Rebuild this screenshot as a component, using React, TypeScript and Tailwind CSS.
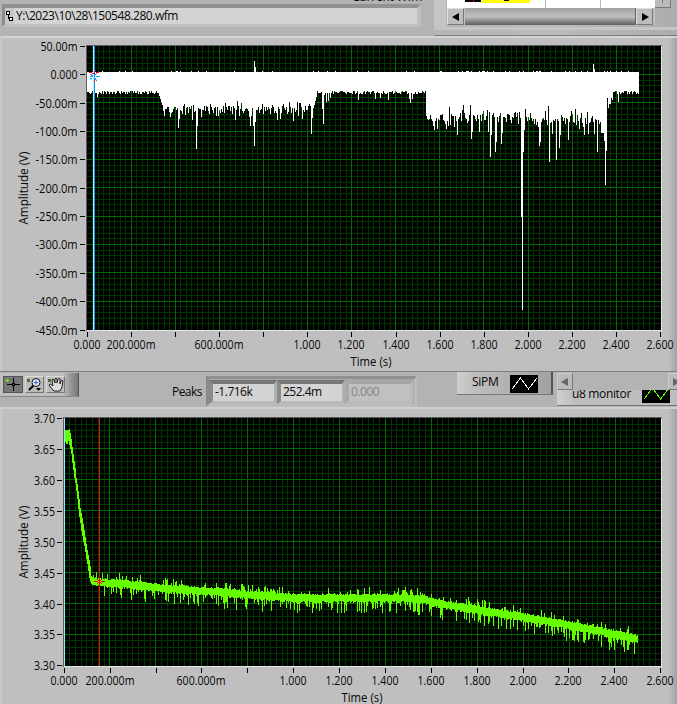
import React from 'react';

const FONT = '"Open Sans", "Noto Sans", sans-serif';

// Repeatable noise, so that the traces look the same on each render.
function noise(seed: number) {
  let s = seed;
  return () => {
    s = (s * 1664525 + 1013904223) % 4294967296;
    return s / 4294967296;
  };
}

function interpolate(points: number[][], x: number) {
  for (let i = 1; i < points.length; i++) {
    if (x <= points[i][0]) {
      const [x0, y0] = points[i - 1];
      const [x1, y1] = points[i];
      return y0 + ((y1 - y0) * (x - x0)) / (x1 - x0);
    }
  }
  return points[points.length - 1][1];
}

const sipmSpikes: Record<number, number> = {
  97: 97, 163: 111, 164: 116, 165: 109, 170: 117, 171: 113, 178: 128, 179: 119, 185: 115, 188: 113, 190: 109, 192: 120, 194: 112,
  196: 149, 197: 126, 201: 117, 216: 116, 218: 116, 235: 120, 249: 117, 250: 126, 251: 116, 253: 126, 254: 146, 255: 122,
  277: 120, 280: 119, 293: 121, 302: 119, 308: 106, 309: 104, 310: 106, 311: 134, 312: 118, 313: 108, 314: 105, 315: 101, 316: 97,
  322: 109, 323: 124, 324: 95, 326: 102, 328: 101, 330: 98, 358: 100, 375: 99, 380: 98, 388: 100, 409: 99, 410: 103, 412: 99,
  426: 116, 428: 120, 434: 130, 435: 121, 437: 129, 446: 129, 449: 107, 454: 127, 457: 135, 463: 105, 470: 105, 471: 139, 472: 132, 479: 132, 487: 110, 488: 132,
  490: 157, 491: 135, 495: 152, 496: 142, 501: 144, 502: 133, 521: 217, 522: 310, 523: 152, 524: 130,
  539: 146, 540: 142, 548: 106, 549: 162, 552: 134, 556: 160, 559: 148, 560: 135, 568: 140, 575: 109, 584: 135, 588: 134, 594: 134, 597: 152,
  601: 133, 602: 133, 603: 133, 604: 141, 605: 185, 606: 151, 607: 98, 608: 108, 609: 104, 610: 104, 611: 98, 612: 100, 618: 102,
};

function sipmPath() {
  const r = noise(71);
  let top = '';
  const lower: string[] = [];
  for (let x = 87; x < 639; x++) {
    let y = 91 + Math.floor(r() * 4);
    if (x > 158 && x < 164) y = 93 + (x - 158) * 3;
    else if (x >= 164 && x < 310) y = 101 + Math.floor(r() * 7 + r() * 9);
    else if (x >= 426 && x < 605) y = 108 + Math.floor(r() * 9 + r() * 10 + r() * 3);
    if (sipmSpikes[x]) y = sipmSpikes[x];
    let t = 72;
    if (r() < (x > 430 ? 0.13 : 0.06)) t = 71;
    if (x === 254) t = 61;
    if (x === 255) t = 67;
    if (x === 593) t = 64;
    if (x === 594) t = 69;
    top += `${x === 87 ? 'M' : 'L'}${x} ${t}H${x + 1}`;
    lower.unshift(`L${x + 1} ${y}H${x}`);
  }
  return top + lower.join('') + 'Z';
}

const monitorMean = [
  [65, 436], [69, 437], [71, 446], [80, 515], [91, 580], [92, 581], [100, 582], [125, 584], [150, 587], [200, 591], [220, 592],
  [250, 595], [293, 598], [400, 598], [420, 599], [440, 604], [478, 610], [523, 617], [568, 625], [614, 634], [638, 639],
];

function monitorPath() {
  const r = noise(314);
  let upper = '';
  const lower: string[] = [];
  for (let x = 65; x < 638; x++) {
    const m = interpolate(monitorMean, x);
    let a: number;
    let b: number;
    if (x < 69) {
      a = 430;
      b = 440 + Math.floor(r() * 6);
    } else if (x < 91) {
      a = m - 6 - r() * 3;
      b = m + 6 + r() * 4;
    } else {
      a = m - 3 - r() * 1.6;
      b = m + 3 + r() * 2;
      if (r() < 0.28) a -= r() * 7;
      if (r() < 0.42) b += r() * (x > 600 ? 13 : 12);
      if (x < 95 || (x > 99 && x < 104)) b = m + 4;
    }
    upper += `${x === 65 ? 'M' : 'L'}${x} ${Math.round(a)}H${x + 1}`;
    lower.unshift(`L${x + 1} ${Math.round(b)}H${x}`);
  }
  return upper + lower.join('') + 'Z';
}

const SIPM = sipmPath();
const MONITOR = monitorPath();

interface GridProps {
  x0: number;
  y0: number;
  stepX: number;
  stepY: number;
  rows: number;
}

function Grid({ x0, y0, stepX, stepY, rows }: GridProps) {
  const w = 661 - x0;
  const h = Math.round(stepY * rows);
  let minor = '';
  let major = '';
  for (let i = 1; i < 13 * 8; i++) {
    const d = `M${Math.floor(x0 + (i * stepX) / 8) + 0.5} ${y0}v${h}`;
    if (i % 8 === 0) major += d;
    else minor += d;
  }
  for (let i = 1; i < rows * 5; i++) {
    const d = `M${x0} ${Math.floor(y0 + (i * stepY) / 5) + 0.5}h${w}`;
    if (i % 5 === 0) major += d;
    else minor += d;
  }
  return (
    <g shapeRendering="crispEdges">
      <rect x={x0 - 1} y={y0 - 1} width={w + 2} height={h + 2} fill="#5c5c5c" />
      <rect x={x0} y={y0 + h} width={w + 1} height={1} fill="#e6e6e6" />
      <rect x={661} y={y0} width={1} height={h} fill="#e6e6e6" />
      <rect x={x0} y={y0} width={w} height={h} fill="#000" />
      <path d={minor} stroke="#003600" />
      <path d={major} stroke="#006a00" />
    </g>
  );
}

function Label({ x, y, w, anchor = 'middle', children }: { x: number; y: number; w: number; anchor?: 'middle' | 'end'; children: string }) {
  return (
    <text x={x} y={y} textAnchor={anchor} textLength={w} lengthAdjust="spacingAndGlyphs" fontFamily={FONT} fontSize="12" fill="#080808">
      {children}
    </text>
  );
}

const timeLabels = ['0.000', '200.000m', '', '600.000m', '', '1.000', '1.200', '1.400', '1.600', '1.800', '2.000', '2.200', '2.400', '2.600'];

function TimeAxis({ x0, step, y, titleX }: { x0: number; step: number; y: number; titleX: number }) {
  return (
    <g>
      {timeLabels.map((t, i) => {
        const x = Math.floor(x0 + i * step + 0.3);
        return (
          <g key={i}>
            <rect x={x} y={y} width="1" height="5" fill="#000" />
            {t && <Label x={x} y={y + 17} w={t.length > 5 ? 49 : 27}>{t}</Label>}
          </g>
        );
      })}
      <Label x={titleX} y={y + 33.5} w={41}>Time (s)</Label>
    </g>
  );
}

function Amplitude({ y }: { y: number }) {
  return (
    <g transform={`translate(27.5 ${y}) rotate(-90)`}>
      <Label x={0} y={0} w={73}>Amplitude (V)</Label>
    </g>
  );
}

const voltLabels = ['50.00m', '0.000', '-50.00m', '-100.0m', '-150.0m', '-200.0m', '-250.0m', '-300.0m', '-350.0m', '-400.0m', '-450.0m'];
const voltWidths = [37, 27, 42, 42, 42, 42, 42, 42, 42, 42, 42];
const monitorLabels = ['3.70', '3.65', '3.60', '3.55', '3.50', '3.45', '3.40', '3.35', '3.30'];

function SipmChart() {
  return (
    <svg width="677" height="333" viewBox="0 38 677 333" className="block">
      <Grid x0={87} y0={46} stepX={44.1} stepY={28.35} rows={10} />
      <path d={SIPM} fill="#fff" shapeRendering="crispEdges" />
      {voltLabels.map((t, i) => {
        const y = Math.round(46 + i * 28.35);
        return (
          <g key={t}>
            <rect x="80" y={y} width="5" height="1" fill="#000" />
            <Label x={77.5} y={y + 4.5} w={voltWidths[i]} anchor="end">{t}</Label>
          </g>
        );
      })}
      <TimeAxis x0={87} step={44.1} y={332} titleX={371} />
      <Amplitude y={188} />
      <g shapeRendering="crispEdges">
        <rect x="93" y="46" width="1" height="284" fill="#aaf4ff" />
        <rect x="94" y="46" width="1" height="284" fill="#1e8cff" />
        <path d="M89 72.5h3M96 72.5h3M92 70.5h1M95 70.5h1M92 73.5h3" stroke="#f00" />
        <path d="M90 76.5h3M96 76.5h4M90 74l3 2M97 73l-3 3M94 77l3 4M92 78l-3 2" stroke="#2a98ff" />
        <path d="M89 79.5h3M96 79.5h2M91 81.5h1M96 81.5h1" stroke="#95f5ff" />
        <rect x="94" y="80" width="1" height="2" fill="#f00" />
      </g>
    </svg>
  );
}

function MonitorChart() {
  return (
    <svg width="677" height="295" viewBox="0 409 677 295" className="block">
      <Grid x0={64} y0={418} stepX={45.92} stepY={30.95} rows={8} />
      <path d={MONITOR} fill="#6f0" shapeRendering="crispEdges" />
      {monitorLabels.map((t, i) => {
        const y = Math.round(418 + i * 30.92);
        return (
          <g key={t}>
            <rect x="57" y={y} width="5" height="1" fill="#000" />
            <Label x={55} y={y + 4.5} w={21} anchor="end">{t}</Label>
          </g>
        );
      })}
      <TimeAxis x0={64} step={45.87} y={668} titleX={362} />
      <Amplitude y={542} />
      <g shapeRendering="crispEdges">
        <rect x="64" y="418" width="1" height="248" fill="#7df4ff" />
        <rect x="99" y="418" width="1" height="248" fill="#e01808" />
        <path d="M94 581.5h4M101 581.5h4M97 579.5h1M101 579.5h1M98 580.5h3M98 582.5h3M97 583.5h1M101 583.5h1" stroke="#f00" />
      </g>
    </svg>
  );
}

function Wave({ color, className }: { color: string; className: string }) {
  return (
    <svg width="28" height="18" viewBox="0 0 28 18" className={className} shapeRendering="crispEdges">
      <rect width="28" height="18" fill="#000" />
      <path d="M2 14L10.500 3L18.500 14L27 3" fill="none" stroke={color} strokeWidth="1" />
    </svg>
  );
}

function Arrow({ flip, color }: { flip?: boolean; color: string }) {
  return (
    <svg width="8" height="8" viewBox="0 0 8 8" className="shrink-0">
      <path d={flip ? 'M1 0L8 4L1 8Z' : 'M7 0L0 4L7 8Z'} fill={color} />
    </svg>
  );
}

function Header() {
  return (
    <div className="flex h-[36px] overflow-hidden bg-[#b3b3b3]">
      <div className="relative h-[36px] w-[434px] shrink-0 pl-[2px] pt-[4px]">
        <span className="absolute left-[352px] top-[-11px] text-[12px] leading-[16px] tracking-[-0.2px]">Current Wfm</span>
        <div className="relative flex h-[23px] w-[419px] items-center border-b-[3px] border-l-[3px] border-r-[4px] border-t-[4px] border-b-[#bebebe] border-l-[#8c8c8c] border-r-[#bebebe] border-t-[#929292] bg-[#d3d3d3]">
          <div className="flex h-full w-[9px] items-center justify-center bg-[#c7c7c7]">
            <svg width="7" height="11" viewBox="0 0 7 11" shapeRendering="crispEdges">
              <path d="M.5 .5h3v3h-3zM3.5 6.500h3v3h-3zM2.500 4v3.500h1" fill="#fff" stroke="#000" />
            </svg>
          </div>
          <span className="ml-[2px] whitespace-nowrap text-[12px] leading-[16px] tracking-[-0.46px]">Y:\2023\10\28\150548.280.wfm</span>
        </div>
      </div>
      <div className="h-[36px] w-[243px] border-b border-[#7c7c7c] bg-gradient-to-r from-[#b4b4b4] via-[#bababa] to-[#adadad]">
        <div className="flex h-[30px] border-b-[3px] border-l-[12px] border-b-[#c5c5c5] border-l-[#c5c5c5]">
          <div className="w-[209px] pl-px">
            <div className="flex h-[8px] bg-white">
              <div className="ml-[18px] flex h-[2px] w-[16px] justify-center bg-black"><i className="h-[2px] w-px bg-red-600" /></div>
              <div className="ml-px flex h-[3px] w-[48px] justify-center bg-[#ff0]"><i className="h-px w-[5px] bg-black" /></div>
              <div className="ml-[15px] h-full w-px bg-[#b8b8b8]" />
              <div className="ml-[54px] h-full w-px bg-[#b8b8b8]" />
            </div>
            <div className="flex h-[17px] justify-between bg-[#c0c0c0]">
              <div className="flex w-[17px] items-center justify-center border border-b-[#777] border-l-[#e0e0e0] border-r-[#777] border-t-[#e0e0e0] bg-[#bdbdbd]"><Arrow color="#000" /></div>
              <div className="w-[171px] border-r border-[#5d5d5d] bg-gradient-to-b from-[#a2a2a2] via-[#c0c0c0] to-[#606060]" />
              <div className="mr-[2px] flex w-[17px] items-center justify-center border border-b-[#777] border-l-[#e0e0e0] border-r-[#777] border-t-[#e0e0e0] bg-[#bdbdbd]"><Arrow flip color="#000" /></div>
            </div>
          </div>
          <div className="flex h-[8px] w-[16px] justify-center border-b border-r border-[#777] bg-[#bbb]"><i className="h-[3px] w-px bg-[#777]" /></div>
        </div>
      </div>
    </div>
  );
}

function Palette() {
  return (
    <div className="mt-px flex h-[24px] w-[79px] items-center gap-[2px] border-b border-r border-b-[#888] border-r-[#555] bg-gradient-to-r from-[#c0c0c0] from-80% to-[#777] pl-[3px]">
      <div className="h-[17px] w-[20px] border border-[#555] bg-[#777]">
        <svg width="18" height="15" viewBox="0 0 18 15" shapeRendering="crispEdges">
          <path d="M3 7.5h13M9.5 1v13" stroke="#000" />
          <path d="M8.5 6.5h2v2h-2z" fill="#777" stroke="#000" />
          <path d="M1 3.5h4M3.5 2v3" stroke="#6f0" />
        </svg>
      </div>
      <div className="h-[17px] w-[19px] border border-b-[#777] border-l-[#ddd] border-r-[#777] border-t-[#ddd] bg-[#bbb]">
        <svg width="17" height="15" viewBox="0 0 17 15">
          <path d="M1 2h3v3H1z" fill="#47703d" />
          <path d="M7.5 8.5L3 13" stroke="#000" strokeWidth="2" />
          <circle cx="10" cy="5.500" r="4" fill="#e4e9ff" stroke="#111" />
          <path d="M8 5.5h4M10 3.5v4" stroke="#3455c8" />
          <path d="M10 11h5l-2.5 3z" fill="#000" />
        </svg>
      </div>
      <div className="h-[17px] w-[19px] border border-b-[#777] border-l-[#ddd] border-r-[#777] border-t-[#ddd] bg-[#bbb]">
        <svg width="17" height="15" viewBox="0 0 17 15">
          <path d="M1 2h3v3H1z" fill="#47703d" />
          <path d="M6 13L2 8q1-2 3 0l1 1L5 3q1-2 2 0l1 3V2q1-2 2 0v4l1-4q1-1 2 0v5l1-3q1-1 2 0l-1 6-2 4H7z" fill="#ddd" stroke="#111" strokeWidth="0.9" />
        </svg>
      </div>
    </div>
  );
}

function PeakField({ value, off }: { value: string; off?: boolean }) {
  return (
    <div
      className={
        off
          ? 'flex h-[24px] w-[68px] items-center border-b-[3px] border-l-[4px] border-r-[3px] border-t-[4px] border-b-[#bababa] border-l-[#a9a9a9] border-r-[#bababa] border-t-[#a6a6a6] bg-[#c0c0c0] text-[#858585]'
          : 'flex h-[24px] w-[68px] items-center border-b-[3px] border-l-[4px] border-r-[3px] border-t-[4px] border-b-[#bababa] border-l-[#8b8b8b] border-r-[#b0b0b0] border-t-[#777] bg-[#d3d3d3]'
      }
    >
      <span className="pl-[2px] text-[12px] leading-[16px] tracking-[-0.5px]">{value}</span>
    </div>
  );
}

function Toolbar() {
  return (
    <div className="flex h-[38px] overflow-hidden border-b-2 border-t border-b-[#d0d0d0] border-t-[#7d7d7d] bg-[#b3b3b3]">
      <Palette />
      <span className="ml-[93px] mt-[12px] w-[34px] text-[12px] leading-[16px] tracking-[-0.55px]">Peaks</span>
      <div className="mt-[4px] flex h-[31px] w-[211px] items-center border-[3px] border-b-[#bcbcbc] border-l-[#8a8a8a] border-r-[#bcbcbc] border-t-[#909090] bg-[#a9a9a9]">
        <PeakField value="-1.716k" />
        <PeakField value="252.4m" />
        <PeakField value="0.000" off />
      </div>
      <div className="ml-[40px] flex h-[23px] w-[96px] items-start border-b border-r-2 border-b-[#777] border-r-[#555] bg-gradient-to-r from-[#cfcfcf] via-[#bdbdbd] via-20% to-[#a2a2a2] pl-[15px]">
        <span className="mt-[2px] w-[38px] text-[12px] leading-[16px] tracking-[-0.25px]">SiPM</span>
        <Wave color="#fff" className="mt-[3px]" />
      </div>
      <div className="ml-[4px] h-[35px] w-[120px]">
        <div className="mt-px flex h-[17px] justify-between bg-[#b3b3b3]">
          <div className="flex h-[17px] w-[16px] items-center justify-center border border-b-[#777] border-l-[#ccc] border-r-[#777] border-t-[#ccc] bg-[#bababa]"><Arrow color="#666" /></div>
          <div className="flex h-[17px] w-[9px] items-center overflow-hidden border border-b-[#777] border-l-[#ccc] border-r-0 border-t-[#ccc] bg-[#bababa] pl-[3px]"><Arrow flip color="#666" /></div>
        </div>
        <div className="flex h-[16px] items-end overflow-hidden border-b border-[#777] bg-gradient-to-r from-[#cfcfcf] via-[#bdbdbd] via-15% to-[#bdbdbd] pb-[2px] pl-[15px]">
          <span className="mb-px w-[70px] whitespace-nowrap text-[12px] leading-[16px] tracking-[-0.35px]">u8 monitor</span>
          <Wave color="#6f0" className="shrink-0" />
        </div>
      </div>
    </div>
  );
}

export default function App() {
  return (
    <main className="flex h-[704px] w-[677px] flex-col overflow-hidden bg-[#bfbfbf] text-[#080808] [font-family:'Open_Sans','Noto_Sans',sans-serif]">
      <Header />
      <section className="h-[335px] border-l-2 border-t-2 border-l-[#c8c8c8] border-t-[#d4d4d4] bg-gradient-to-r from-[#bfbfbf] from-[98.8%] to-[#a2a2a2]">
        <div className="-ml-[2px]"><SipmChart /></div>
      </section>
      <Toolbar />
      <section className="h-[295px] border-l-2 border-[#c8c8c8] bg-gradient-to-r from-[#bfbfbf] from-[98.8%] to-[#a2a2a2]">
        <div className="-ml-[2px]"><MonitorChart /></div>
      </section>
    </main>
  );
}
